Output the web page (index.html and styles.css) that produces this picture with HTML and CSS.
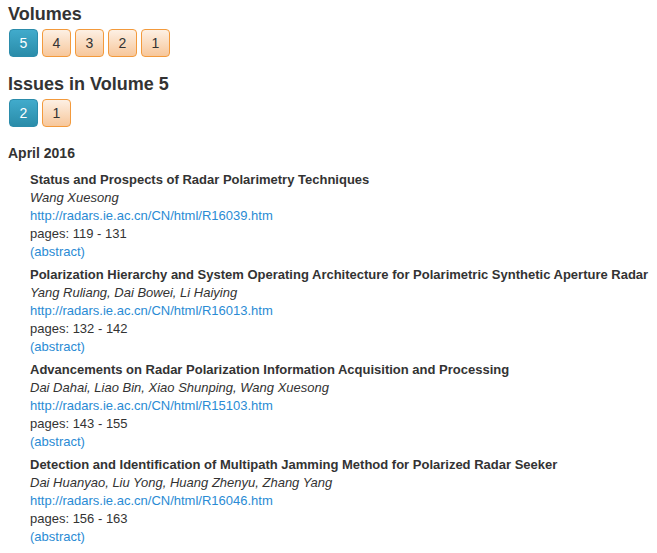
FILE: index.html
```html
<!DOCTYPE html>
<html>
<head>
<meta charset="utf-8">
<link rel="stylesheet" href="styles.css">
</head>
<body>
<div class="page">
  <h2 class="heading">Volumes</h2>
  <div class="btn-row">
    <a class="btn btn-active">5</a>
    <a class="btn">4</a>
    <a class="btn">3</a>
    <a class="btn">2</a>
    <a class="btn">1</a>
  </div>
  <h2 class="heading heading-issues">Issues in Volume 5</h2>
  <div class="btn-row">
    <a class="btn btn-active">2</a>
    <a class="btn">1</a>
  </div>
  <h3 class="issue-date">April 2016</h3>
  <div class="articles">
    <div class="article">
      <div class="title">Status and Prospects of Radar Polarimetry Techniques</div>
      <div class="authors">Wang Xuesong</div>
      <a class="link">http://radars.ie.ac.cn/CN/html/R16039.htm</a>
      <div class="pages">pages: 119 - 131</div>
      <a class="link">(abstract)</a>
    </div>
    <div class="article">
      <div class="title">Polarization Hierarchy and System Operating Architecture for Polarimetric Synthetic Aperture Radar</div>
      <div class="authors">Yang Ruliang, Dai Bowei, Li Haiying</div>
      <a class="link">http://radars.ie.ac.cn/CN/html/R16013.htm</a>
      <div class="pages">pages: 132 - 142</div>
      <a class="link">(abstract)</a>
    </div>
    <div class="article">
      <div class="title">Advancements on Radar Polarization Information Acquisition and Processing</div>
      <div class="authors">Dai Dahai, Liao Bin, Xiao Shunping, Wang Xuesong</div>
      <a class="link">http://radars.ie.ac.cn/CN/html/R15103.htm</a>
      <div class="pages">pages: 143 - 155</div>
      <a class="link">(abstract)</a>
    </div>
    <div class="article">
      <div class="title">Detection and Identification of Multipath Jamming Method for Polarized Radar Seeker</div>
      <div class="authors">Dai Huanyao, Liu Yong, Huang Zhenyu, Zhang Yang</div>
      <a class="link">http://radars.ie.ac.cn/CN/html/R16046.htm</a>
      <div class="pages">pages: 156 - 163</div>
      <a class="link">(abstract)</a>
    </div>
  </div>
</div>
</body>
</html>
```

FILE: styles.css
```css
html, body {
  margin: 0;
  padding: 0;
  background: #ffffff;
}
body {
  font-family: "Liberation Sans", Arial, sans-serif;
  color: #333333;
}
.page {
  padding: 4px 8px 0 8px;
}
.heading {
  margin: 0;
  font-size: 18px;
  line-height: 20px;
  font-weight: bold;
  color: #333333;
}
.heading-issues {
  margin-top: 17px;
}
.btn-row {
  display: flex;
  gap: 4px;
  margin-top: 5px;
  padding-left: 1px;
}
.btn {
  box-sizing: border-box;
  width: 29px;
  height: 28px;
  display: flex;
  align-items: center;
  justify-content: center;
  font-size: 14px;
  color: #333333;
  border: 1px solid #f39a3c;
  border-radius: 4px;
  background: linear-gradient(to bottom, #fdf0e4 0%, #f7c79b 100%);
}
.btn-active {
  color: #ffffff;
  border-color: #2b8cab;
  background: linear-gradient(to bottom, #41abcc 0%, #2a8ca9 100%);
}
.issue-date {
  margin: 17px 0 0 0;
  font-size: 14px;
  line-height: 18px;
  font-weight: bold;
  color: #333333;
}
.articles {
  margin-top: 9px;
  padding-left: 22px;
  display: flex;
  flex-direction: column;
  gap: 5px;
}
.article {
  display: flex;
  flex-direction: column;
  font-size: 13px;
  line-height: 18px;
}
.title {
  font-weight: bold;
  color: #333333;
}
.authors {
  font-style: italic;
  color: #333333;
}
.link {
  color: #2a8bd4;
  text-decoration: none;
  align-self: flex-start;
}
.pages {
  color: #333333;
}
```
